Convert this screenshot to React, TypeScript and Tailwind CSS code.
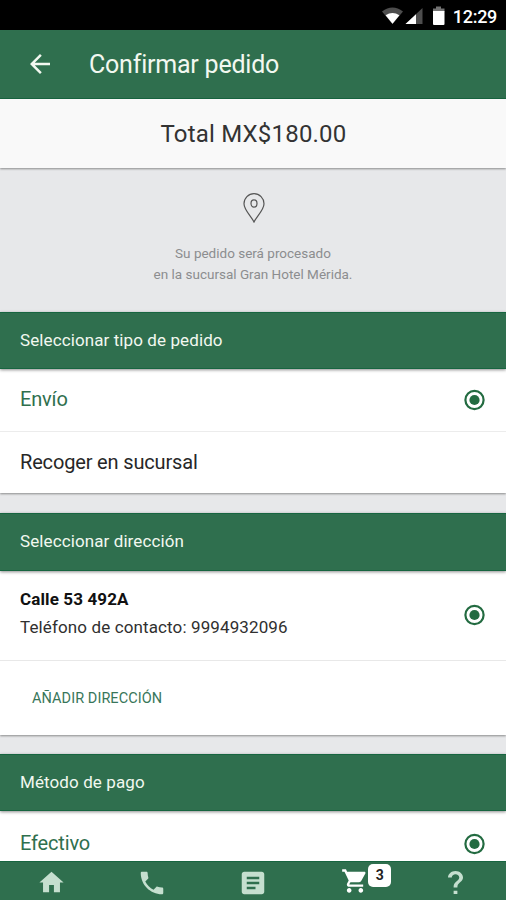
import type { ReactNode } from "react";

function Icon({ d, className }: { d: string; className: string }) {
  return (
    <svg viewBox="0 0 24 24" fill="currentColor" className={className}>
      <path d={d} />
    </svg>
  );
}

function Radio() {
  return (
    <svg viewBox="0 0 22 22" className="h-[22px] w-[22px] shrink-0 text-[#236b41]">
      <circle cx="11.500" cy="11" r="9.100" fill="none" stroke="currentColor" strokeWidth="2.200" />
      <circle cx="11.500" cy="11" r="5.100" fill="currentColor" />
    </svg>
  );
}

function SectionTitle({ children, className }: { children: ReactNode; className: string }) {
  return (
    <h2
      className={`relative flex shrink-0 items-center border-y border-[#176540] bg-[#2f6f4e] px-5 text-[17px] tracking-[0.1px] text-[#f2f8f0] shadow-[0_1px_3px_rgba(0,0,0,0.45)] ${className}`}
    >
      {children}
    </h2>
  );
}

export default function App() {
  return (
    <div className="flex h-[900px] w-[506px] flex-col overflow-hidden bg-[#e7e8ea] font-[Roboto,sans-serif]">
      <div className="flex h-[30px] shrink-0 items-center justify-end bg-black pr-[9px] text-white">
        <svg viewBox="0 0 66 20" className="mr-[5px] mt-[2px] h-5 w-[66px]" fill="currentColor">
          <path d="M0 5.500Q10.500-2.500 21 5.500L10.500 18z" opacity=".3" />
          <path d="M3.600 9.300Q10.500 4.600 17.400 9.300L10.500 17.800z" />
          <path d="M40.500 2v16H23.500z" opacity=".3" />
          <path d="M34 8.200V18H23.500z" />
          <path d="M54 0.500h5v2h3.500v3H51v-3h3z" opacity=".45" />
          <path d="M51 5h11.500V18q0 1-1 1H52q-1 0-1-1z" />
        </svg>
        <span className="mt-[3px] text-[18px] font-medium leading-none tracking-[-0.3px]">12:29</span>
      </div>

      <header className="flex h-[69px] shrink-0 items-center border-b border-[#176540] bg-[#2f6f4e] text-[#f2f8f0]">
        <Icon
          className="ml-[25px] h-[30px] w-[30px]"
          d="M20 11H7.830l5.590-5.590L12 4l-8 8 8 8 1.410-1.410L7.830 13H20v-2z"
        />
        <h1 className="ml-[34px] mt-[2px] text-[25px] tracking-[-0.220px]">Confirmar pedido</h1>
      </header>

      <div className="relative flex h-[69px] shrink-0 items-center justify-center bg-[#f9f9f9] pl-px text-[24px] tracking-[0.2px] text-[#333] shadow-[0_1px_2px_rgba(0,0,0,0.4)]">
        Total MX$180.00
      </div>

      <div className="flex h-[144px] shrink-0 flex-col items-center pt-[25px] text-center text-[#8c8d8f]">
        <svg viewBox="0 0 22 30" className="ml-px h-[30px] w-[22px] text-[#555]" fill="none" stroke="currentColor" strokeWidth="1.200">
          <path d="M11 29C8.500 23.500 1 17 1 10.700a10 10 0 0 1 20 0C21 17 13.500 23.500 11 29z" />
          <ellipse cx="11" cy="10.500" rx="3" ry="3.600" />
        </svg>
        <p className="mt-[20px] text-[13.500px] leading-[21px]">
          Su pedido será procesado
          <br />
          en la sucursal Gran Hotel Mérida.
        </p>
      </div>

      <SectionTitle className="h-[57px]">Seleccionar tipo de pedido</SectionTitle>
      <div className="flex h-[124px] shrink-0 flex-col bg-white text-[20px] tracking-[-0.160px] shadow-[0_1px_2px_rgba(0,0,0,0.4)]">
        <div className="flex h-[63px] items-center justify-between border-b border-[#ececec] pl-5 pr-[21px] text-[#2f6f4e]">
          <span className="mb-[2px]">Envío</span>
          <Radio />
        </div>
        <div className="flex h-[61px] items-center px-5 pb-[2px] text-[#272727]">Recoger en sucursal</div>
      </div>

      <SectionTitle className="mt-5 h-[58px]">Seleccionar dirección</SectionTitle>
      <div className="flex h-[164px] shrink-0 flex-col bg-white shadow-[0_1px_2px_rgba(0,0,0,0.4)]">
        <div className="flex h-[90px] items-center justify-between border-b border-[#e8e8e8] pb-[2px] pl-5 pr-[21px]">
          <p className="mt-[-4px] text-[17px] leading-[28px] tracking-[0.120px] text-[#303030]">
            <strong className="font-bold text-[#111]">Calle 53 492A</strong>
            <br />
            Teléfono de contacto: 9994932096
          </p>
          <Radio />
        </div>
        <div className="flex h-[74px] items-center pl-8 pt-px text-[14.500px] tracking-[0.060px] text-[#38765a]">AÑADIR DIRECCIÓN</div>
      </div>

      <SectionTitle className="mt-[19px] h-[57px]">Método de pago</SectionTitle>
      <div className="flex h-[50px] shrink-0 items-start justify-between bg-white pl-5 pr-[21px] pt-[17px] text-[20px] tracking-[-0.160px] text-[#2f6f4e]">
        <span className="leading-[30px]">Efectivo</span>
        <span className="mt-[5px]">
          <Radio />
        </span>
      </div>

      <nav className="relative grid h-[39px] shrink-0 grid-cols-5 items-center justify-items-center border-t border-[#176540] bg-[#2f6f4e] pt-[3px] text-[#c5dfcf]">
        <Icon className="ml-px h-[29px] w-[29px]" d="M10 20v-6h4v6h5v-8h3L12 3 2 12h3v8z" />
        <Icon
          className="ml-px h-[30px] w-[30px]"
          d="M6.620 10.790c1.440 2.830 3.760 5.140 6.590 6.590l2.200-2.200c.27-.27.67-.36 1.020-.24 1.120.37 2.330.57 3.570.57.55 0 1 .45 1 1V20c0 .55-.45 1-1 1-9.390 0-17-7.610-17-17 0-.55.45-1 1-1h3.500c.55 0 1 .45 1 1 0 1.250.2 2.450.57 3.570.11.35.03.74-.25 1.020l-2.200 2.200z"
        />
        <Icon
          className="ml-px h-[30px] w-[30px]"
          d="M19 3H5c-1.100 0-2 .9-2 2v14c0 1.100.9 2 2 2h14c1.100 0 2-.9 2-2V5c0-1.100-.9-2-2-2zm-5 14H7v-2h7v2zm3-4H7v-2h10v2zm0-4H7V7h10v2z"
        />
        <div className="relative mb-[4px] ml-[2px] text-white">
          <Icon
            className="h-7 w-7"
            d="M7 18c-1.100 0-1.990.9-1.990 2S5.900 22 7 22s2-.9 2-2-.9-2-2-2zM1 2v2h2l3.600 7.590-1.350 2.450c-.16.28-.25.61-.25.96 0 1.100.9 2 2 2h12v-2H7.420c-.14 0-.25-.11-.25-.25l.03-.12.9-1.630h7.450c.75 0 1.410-.41 1.750-1.030l3.580-6.490c.08-.14.12-.31.12-.48 0-.55-.45-1-1-1H5.210l-.94-2H1zm16 16c-1.100 0-1.990.9-1.990 2s.89 2 1.990 2 2-.9 2-2-.9-2-2-2z"
          />
          <span className="absolute left-[27px] top-[-3px] flex h-[23px] w-[23px] items-center justify-center rounded-[5px] bg-white text-[14px] font-bold text-[#222]">
            3
          </span>
        </div>
        <svg viewBox="8 5 8 14" preserveAspectRatio="none" className="h-[23px] w-[15px]" fill="currentColor">
          <path d="M15.070 11.250l-.9.920C13.450 12.900 13 13.500 13 15h-2v-.5c0-1.100.45-2.100 1.170-2.830l1.240-1.260c.37-.36.59-.86.59-1.410 0-1.100-.9-2-2-2s-2 .9-2 2H8c0-2.210 1.790-4 4-4s4 1.790 4 4c0 .88-.36 1.680-.93 2.250zM13 19h-2v-2h2z" />
        </svg>
      </nav>
    </div>
  );
}
